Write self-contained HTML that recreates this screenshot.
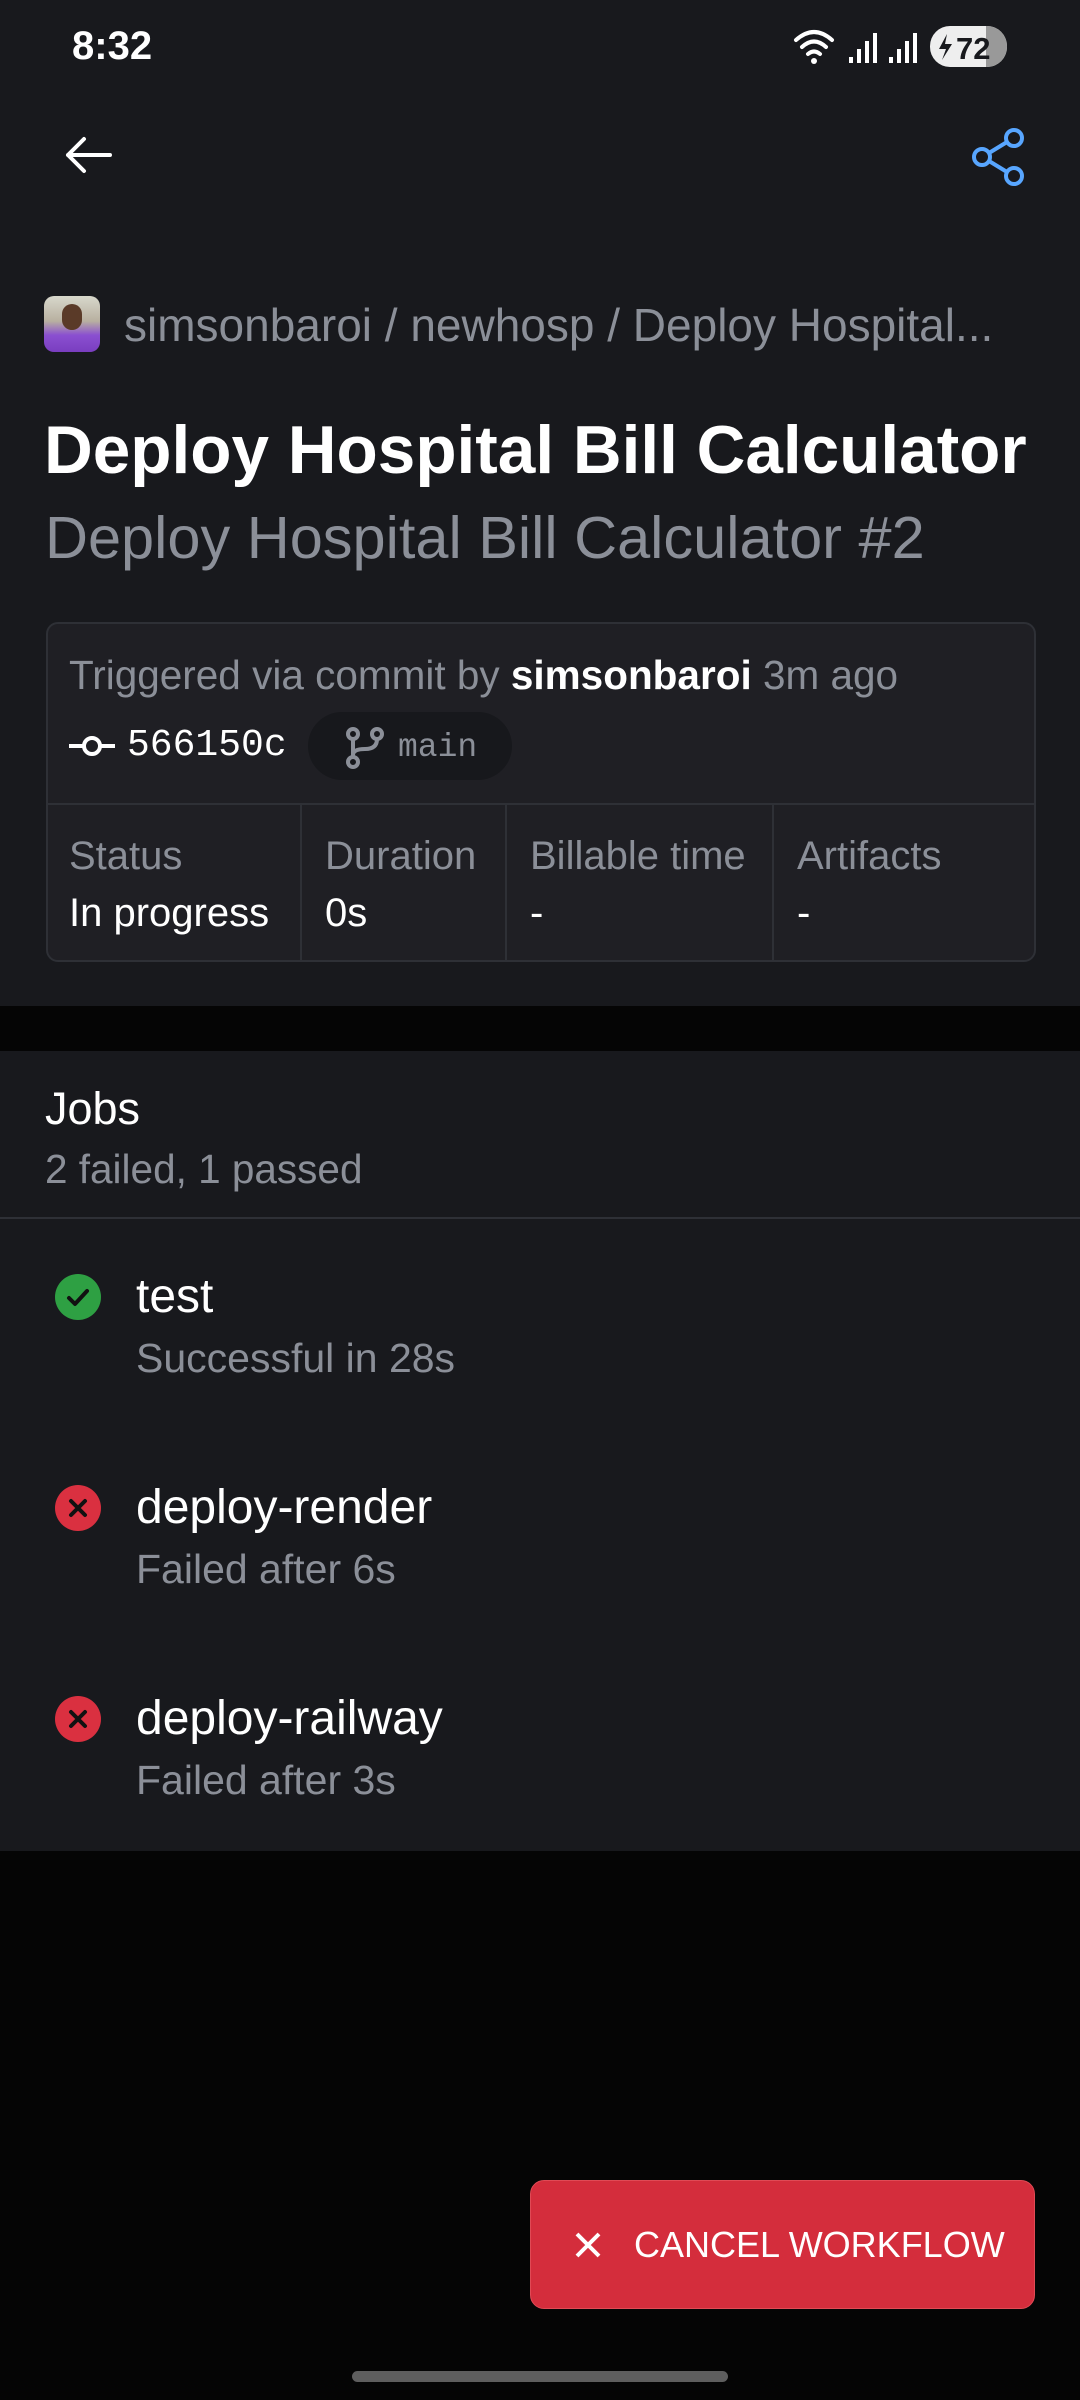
<!DOCTYPE html>
<html><head><meta charset="utf-8"><style>
*{margin:0;padding:0;box-sizing:border-box}
body{width:1080px;height:2400px;background:#050505;font-family:"Liberation Sans",sans-serif;position:relative;overflow:hidden;color:#fff}
.abs{position:absolute;white-space:nowrap}
.top{position:absolute;left:0;top:0;width:1080px;height:1006px;background:#18191d}
.jobs{position:absolute;left:0;top:1051px;width:1080px;height:800px;background:#18191d}
.gray{color:#8b8f98}
.card{position:absolute;left:46px;top:622px;width:990px;height:340px;background:#1f1f24;border:2px solid #2e3036;border-radius:12px}
.mono{font-family:"Liberation Mono",monospace}
.vl{position:absolute;top:181px;bottom:0;width:2px;background:#2e3036}
</style></head><body>
<div class="top"></div>
<div class="jobs"></div>

<div class="abs" style="left:72px;top:24px;font-size:40px;font-weight:bold;">8:32</div>
<svg class="abs" style="left:790px;top:24px" width="230" height="48" viewBox="0 0 230 48">
 <path d="M6 16 Q24 0 42 16" stroke="#fff" stroke-width="4" fill="none" stroke-linecap="round"/>
 <path d="M12 23 Q24 12 36 23" stroke="#fff" stroke-width="4" fill="none" stroke-linecap="round"/>
 <path d="M18 30 Q24 25 30 30" stroke="#fff" stroke-width="4" fill="none" stroke-linecap="round"/>
 <circle cx="24" cy="37" r="3" fill="#fff"/>
 <rect x="59" y="33" width="4" height="6" fill="#fff"/><rect x="67" y="25" width="4" height="14" fill="#fff"/><rect x="75" y="17" width="4" height="22" fill="#fff"/><rect x="83" y="9" width="4" height="30" fill="#fff"/>
 <rect x="99" y="33" width="4" height="6" fill="#fff"/><rect x="107" y="25" width="4" height="14" fill="#fff"/><rect x="115" y="17" width="4" height="22" fill="#fff"/><rect x="123" y="9" width="4" height="30" fill="#fff"/>
 <clipPath id="bc"><rect x="140" y="2" width="77" height="41" rx="20"/></clipPath>
 <g clip-path="url(#bc)"><rect x="140" y="2" width="77" height="41" fill="#eee"/><rect x="196" y="2" width="22" height="41" fill="#999"/></g>
 <path d="M157 10 L149 25 L156 25 L152 36 L162 20 L155 20 Z" fill="#18191d"/>
 <text x="166" y="35" font-family="Liberation Sans" font-weight="bold" font-size="31" fill="#18191d">72</text>
</svg>

<svg class="abs" style="left:60px;top:130px" width="60" height="50" viewBox="0 0 60 50">
 <path d="M50 25 H8 M24 9 L8 25 L24 41" stroke="#fff" stroke-width="4" fill="none" stroke-linecap="round" stroke-linejoin="round"/>
</svg>
<svg class="abs" style="left:966px;top:124px" width="66" height="66" viewBox="0 0 66 66">
 <g stroke="#58a6ff" stroke-width="4" fill="none">
 <circle cx="48" cy="14" r="8"/><circle cx="16" cy="33" r="8"/><circle cx="48" cy="52" r="8"/>
 <path d="M23 29 L41 18 M23 37 L41 48"/></g>
</svg>

<div class="abs" style="left:44px;top:296px;width:56px;height:56px;border-radius:10px;background:linear-gradient(#d8d8cc 0%,#b8b0a0 45%,#8a4fd0 70%,#7a3ec0 100%);overflow:hidden">
 <div style="position:absolute;left:18px;top:8px;width:20px;height:26px;border-radius:10px;background:#5a3a28"></div>
</div>
<div class="abs gray" style="left:124px;top:297px;font-size:46px;line-height:56px">simsonbaroi / newhosp / Deploy Hospital...</div>

<div class="abs" style="left:44px;top:411px;font-size:67.5px;font-weight:bold;line-height:80px">Deploy Hospital Bill Calculator</div>
<div class="abs gray" style="left:45px;top:503px;font-size:59.5px;line-height:70px">Deploy Hospital Bill Calculator #2</div>

<div class="card">
 <div class="abs" style="left:21px;top:27px;font-size:40.5px;line-height:48px"><span class="gray">Triggered via commit by </span><span style="font-weight:bold">simsonbaroi</span><span class="gray"> 3m ago</span></div>
 <svg class="abs" style="left:21px;top:107px" width="46" height="30" viewBox="0 0 46 30"><circle cx="23" cy="15" r="8" stroke="#fff" stroke-width="4" fill="none"/><path d="M0 15 H15 M31 15 H46" stroke="#fff" stroke-width="4"/></svg>
 <div class="abs mono" style="left:79px;top:99px;font-size:38px;line-height:46px">566150c</div>
 <div class="abs" style="left:260px;top:88px;width:204px;height:68px;border-radius:34px;background:#17181c"></div>
 <svg class="abs" style="left:297px;top:103px" width="40" height="42" viewBox="0 0 40 42"><g stroke="#8b8f98" stroke-width="4" fill="none"><circle cx="8" cy="7" r="5"/><circle cx="8" cy="35" r="5"/><circle cx="32" cy="7" r="5"/><path d="M8 12 V30 M32 12 Q32 22 20 22 Q8 22 8 28"/></g></svg>
 <div class="abs mono gray" style="left:350px;top:104px;font-size:33px;line-height:40px">main</div>
 <div style="position:absolute;left:0;right:0;top:179px;height:2px;background:#2e3036"></div>
 <div class="vl" style="left:252px"></div><div class="vl" style="left:457px"></div><div class="vl" style="left:724px"></div>
 <div class="abs gray" style="left:21px;top:208px;font-size:40px;line-height:48px">Status</div>
 <div class="abs" style="left:21px;top:265px;font-size:40px;line-height:48px">In progress</div>
 <div class="abs gray" style="left:277px;top:208px;font-size:40px;line-height:48px">Duration</div>
 <div class="abs" style="left:277px;top:265px;font-size:40px;line-height:48px">0s</div>
 <div class="abs gray" style="left:482px;top:208px;font-size:40px;line-height:48px">Billable time</div>
 <div class="abs" style="left:482px;top:265px;font-size:40px;line-height:48px">-</div>
 <div class="abs gray" style="left:749px;top:208px;font-size:40px;line-height:48px">Artifacts</div>
 <div class="abs" style="left:749px;top:265px;font-size:40px;line-height:48px">-</div>
</div>

<div class="abs" style="left:45px;top:1082px;font-size:45px;line-height:54px">Jobs</div>
<div class="abs gray" style="left:45px;top:1145px;font-size:40.5px;line-height:48px">2 failed, 1 passed</div>
<div style="position:absolute;left:0;top:1217px;width:1080px;height:2px;background:#2e3036"></div>

<svg class="abs" style="left:55px;top:1274px" width="46" height="46" viewBox="0 0 46 46"><circle cx="23" cy="23" r="23" fill="#2ea043"/><path d="M14 24 L20 30 L32 17" stroke="#111" stroke-width="4" fill="none" stroke-linecap="round" stroke-linejoin="round"/></svg>
<div class="abs" style="left:136px;top:1269px;font-size:48px;line-height:56px">test</div>
<div class="abs gray" style="left:136px;top:1334px;font-size:41px;line-height:48px">Successful in 28s</div>

<svg class="abs" style="left:55px;top:1485px" width="46" height="46" viewBox="0 0 46 46"><circle cx="23" cy="23" r="23" fill="#da3040"/><path d="M16 16 L30 30 M30 16 L16 30" stroke="#111" stroke-width="4" stroke-linecap="round"/></svg>
<div class="abs" style="left:136px;top:1480px;font-size:48px;line-height:56px">deploy-render</div>
<div class="abs gray" style="left:136px;top:1545px;font-size:41px;line-height:48px">Failed after 6s</div>

<svg class="abs" style="left:55px;top:1696px" width="46" height="46" viewBox="0 0 46 46"><circle cx="23" cy="23" r="23" fill="#da3040"/><path d="M16 16 L30 30 M30 16 L16 30" stroke="#111" stroke-width="4" stroke-linecap="round"/></svg>
<div class="abs" style="left:136px;top:1691px;font-size:48px;line-height:56px">deploy-railway</div>
<div class="abs gray" style="left:136px;top:1756px;font-size:41px;line-height:48px">Failed after 3s</div>

<div class="abs" style="left:530px;top:2180px;width:505px;height:129px;background:#d42d3c;border-radius:14px;border:1px solid #e04a55"></div>
<svg class="abs" style="left:574px;top:2231px" width="28" height="28" viewBox="0 0 28 28"><path d="M3 3 L25 25 M25 3 L3 25" stroke="#fff" stroke-width="4"/></svg>
<div class="abs" style="left:634px;top:2223px;font-size:36px;line-height:44px;color:#fff">CANCEL WORKFLOW</div>

<div class="abs" style="left:352px;top:2371px;width:376px;height:11px;border-radius:6px;background:#5e5e5e"></div>
</body></html>
